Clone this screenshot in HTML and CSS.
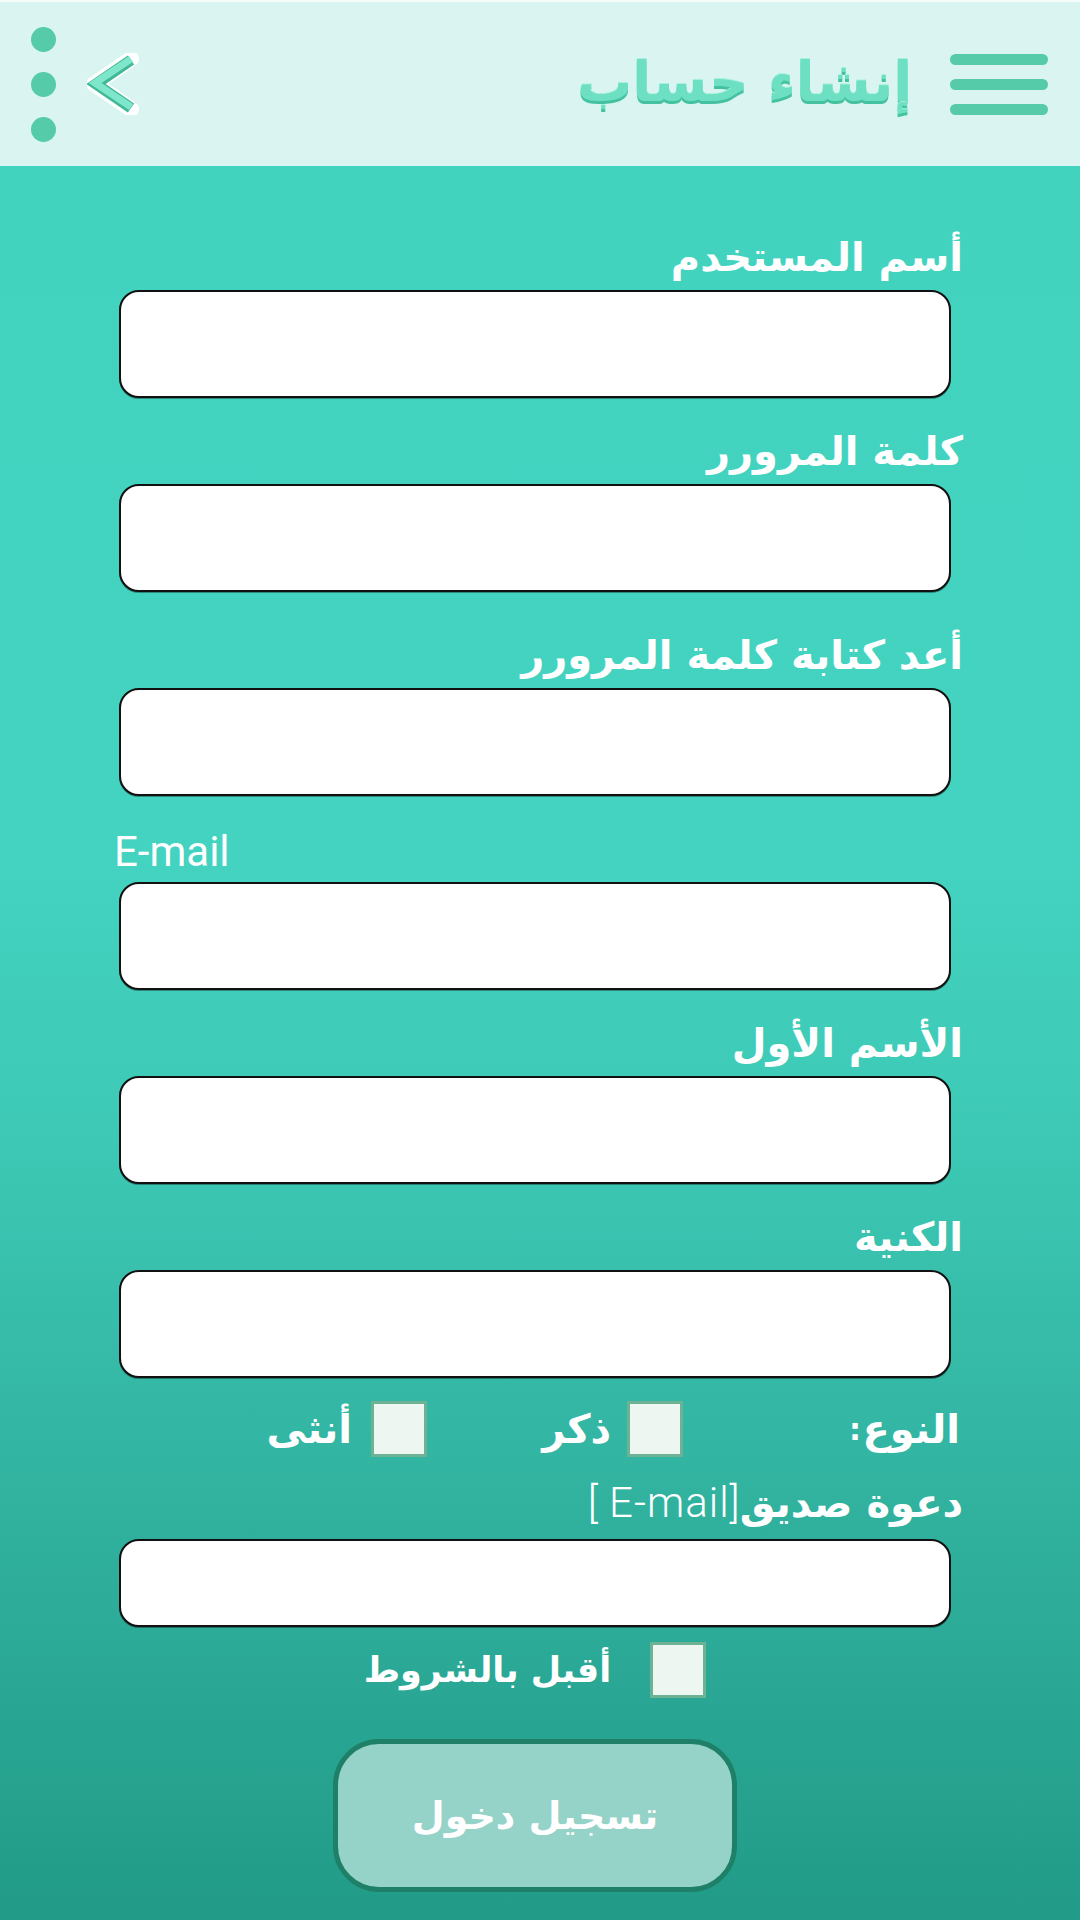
FILE: index.html
```html
<!DOCTYPE html>
<html lang="ar" dir="rtl">
<head>
<meta charset="utf-8">
<title>إنشاء حساب</title>
<link rel="stylesheet" href="styles.css">
</head>
<body>
<header class="topbar">
  <div class="menu" aria-label="القائمة"><span></span><span></span><span></span></div>
  <h1 class="title">إنشاء حساب</h1>
  <div class="spacer"></div>
  <svg class="back" width="52" height="62" viewBox="0 0 52 62" aria-label="رجوع">
    <polyline points="44,6 8,31 44,56" fill="none" stroke="#ffffff" stroke-width="16" stroke-linejoin="miter" stroke-linecap="round"/>
    <polyline points="44,7 9,31 44,55" fill="none" stroke="#3fb996" stroke-width="11" stroke-linejoin="miter" stroke-linecap="butt"/>
    <polyline points="44,6 8,30 44,54" fill="none" stroke="#7ee6cb" stroke-width="7" stroke-linejoin="miter" stroke-linecap="butt"/>
  </svg>
  <div class="more"><span></span><span></span><span></span></div>
</header>

<main class="form">
  <div class="field">
    <label class="label">أسم المستخدم</label>
    <input class="input" type="text">
  </div>
  <div class="field">
    <label class="label">كلمة المرورر</label>
    <input class="input" type="password">
  </div>
  <div class="field field-spaced">
    <label class="label">أعد كتابة كلمة المرورر</label>
    <input class="input" type="password">
  </div>
  <div class="field">
    <label class="label label-latin" dir="ltr">E-mail</label>
    <input class="input" type="email">
  </div>
  <div class="field">
    <label class="label">الأسم الأول</label>
    <input class="input" type="text">
  </div>
  <div class="field">
    <label class="label">الكنية</label>
    <input class="input" type="text">
  </div>

  <div class="gender">
    <div class="gender-title"><span>النوع</span><span class="colon">:</span></div>
    <label class="option option-male"><input class="check" type="checkbox"><span>ذكر</span></label>
    <label class="option option-female"><input class="check" type="checkbox"><span>أنثى</span></label>
  </div>

  <div class="field field-invite">
    <label class="label">دعوة صديق<span class="latin">[E-mail ]</span></label>
    <input class="input input-short" type="email">
  </div>

  <label class="accept"><input class="check" type="checkbox"><span>أقبل بالشروط</span></label>

  <button class="submit" type="button">تسجيل دخول</button>
</main>
</body>
</html>
```

FILE: styles.css
```css
* { box-sizing: border-box; }

html, body {
  margin: 0;
  padding: 0;
}

body {
  width: 1080px;
  min-height: 1920px;
  font-family: "DejaVu Sans", "Noto Sans", sans-serif;
  background: linear-gradient(180deg, #40d2be 0px, #42d3bf 166px, #43d3c0 860px, #3cc8b4 1150px, #34b8a5 1400px, #2aa895 1680px, #219b88 1920px);
}

/* ---------- header ---------- */
.topbar {
  height: 166px;
  background: #daf5f1;
  border-top: 2px solid #f4fcfa;
  display: flex;
  align-items: center;
  padding: 0 32px 0 31px;
}

.menu {
  display: flex;
  flex-direction: column;
  gap: 14px;
  width: 98px;
}
.menu span {
  display: block;
  height: 11px;
  border-radius: 6px;
  background: #55cba9;
}

.title {
  margin: 0 38px 0 0;
  font-size: 55px;
  font-weight: bold;
  line-height: 1;
  color: #6de0c3;
  text-shadow: 0 -1px 0 #a6f0dc, 0 3px 0 #44c19f;
  padding-bottom: 4px;
}

.spacer { flex: 1; }

.back {
  display: block;
  margin-left: 31px;
}

.more {
  display: flex;
  flex-direction: column;
  gap: 20px;
}
.more span {
  display: block;
  width: 25px;
  height: 25px;
  border-radius: 50%;
  background: #55cba9;
}

/* ---------- form ---------- */
.form {
  display: flex;
  flex-direction: column;
  padding: 38px 129px 0 119px;
}

.field {
  display: flex;
  flex-direction: column;
}
.field-spaced { margin-top: 10px; }

.label {
  display: block;
  height: 86px;
  padding-top: 27px;
  margin-right: -12px;
  color: #ffffff;
  font-size: 40px;
  font-weight: bold;
  line-height: 52px;
  text-align: right;
  white-space: nowrap;
}

.label-latin {
  margin-right: 0;
  margin-left: -5px;
  padding-top: 32px;
  text-align: left;
  font-family: Roboto, "Liberation Sans", sans-serif;
  font-weight: 400;
  font-size: 42px;
  line-height: 48px;
}

.latin {
  font-family: Roboto, "Liberation Sans", sans-serif;
  font-weight: 300;
  font-size: 42px;
  letter-spacing: 1px;
}

.input {
  display: block;
  width: 100%;
  height: 108px;
  margin: 0;
  border: 2px solid #111111;
  border-radius: 20px;
  background: #ffffff;
  box-shadow: 0 1px 0 rgba(0, 0, 0, 0.35);
}
.input-short { height: 88px; }

/* gender row */
.gender {
  display: flex;
  align-items: center;
  height: 56px;
  margin-top: 23px;
  margin-right: -9px;
  color: #ffffff;
  font-size: 40px;
  font-weight: bold;
}
.gender-title {
  width: 111px;
  display: flex;
  justify-content: space-between;
  align-items: center;
}
.colon { font-size: 30px; }

.option {
  display: flex;
  align-items: center;
}
.option-male {
  width: 256px;
  gap: 16px;
  margin-right: 166px;
}
.option-female { gap: 19px; }

.check {
  appearance: none;
  -webkit-appearance: none;
  display: block;
  flex: none;
  margin: 0;
  width: 56px;
  height: 56px;
  background: #edf6f1;
  border: 3px solid #6db294;
  border-radius: 0;
}

.field-invite .label {
  height: 82px;
  padding-top: 20px;
}

/* accept terms */
.accept {
  align-self: center;
  display: flex;
  align-items: center;
  gap: 39px;
  margin-top: 15px;
  color: #ffffff;
  font-size: 35px;
  font-weight: bold;
}

/* submit */
.submit {
  align-self: center;
  width: 404px;
  height: 153px;
  margin-top: 41px;
  border: 5px solid #1f8068;
  border-radius: 46px;
  background: #95d2c8;
  color: #ffffff;
  font-family: "DejaVu Sans", sans-serif;
  font-size: 38px;
  font-weight: bold;
}
```
